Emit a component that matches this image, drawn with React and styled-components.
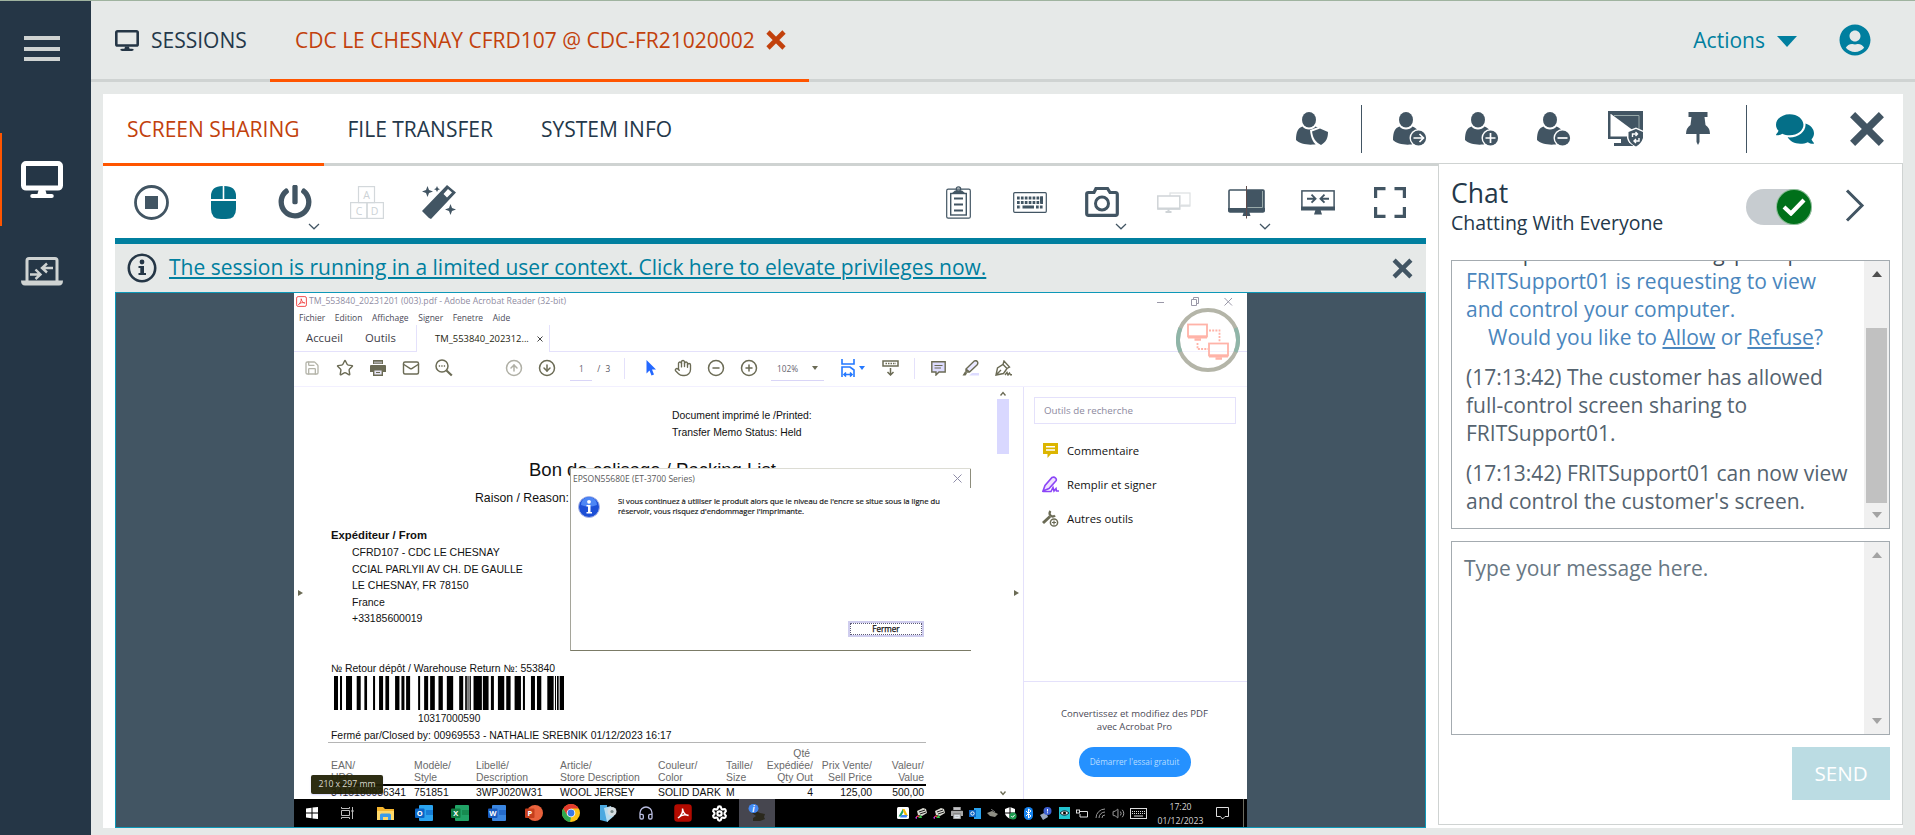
import React from 'react';
import styled, { createGlobalStyle, css } from 'styled-components';
import { FaPowerOff, FaComments, FaUserCircle } from 'react-icons/fa';
import {
  Save, Star, Mail, CircleArrowUp, CircleArrowDown, Hand,
  CircleMinus, CirclePlus, Settings, Headphones, Volume2,
} from 'lucide-react';

const c = {
  navy: '#253646', slate: '#425563', teal: '#007f9f', tealDark: '#046f88', orange: '#ff5500',
  rust: '#c2410c', grey: '#e6e9e8', line: '#cfd3d2', text: '#24384a', lilac: '#e4e1fb', olive: '#6b6b55',
};
const ui = '"Open Sans", "Noto Sans", sans-serif';
const doc = '"Liberation Sans", Arial, sans-serif';

const Global = createGlobalStyle`
  * { box-sizing: border-box; }
  body { margin: 0; background: ${c.grey}; font-family: ${ui}; font-size: 21px; color: ${c.text}; overflow: hidden; }
  svg { display: block; flex: none; }
`;

/* ---------- application shell ---------- */
const Shell = styled.div`
  display: flex; height: 835px; border-top: 1px solid #9fb39f; background: ${c.grey};
`;
const Sidebar = styled.nav`
  width: 91px; flex: none; background: ${c.navy}; display: flex; flex-direction: column;
`;
const Burger = styled.div`
  width: 36px; height: 25px; margin: 35px 0 0 24px; display: flex; flex-direction: column; justify-content: space-between;
  i { height: 4px; background: ${c.line}; }
`;
const NavItem = styled.div`
  height: 93px; display: flex; align-items: center; padding-left: ${p => (p.$active ? 19 : 21)}px;
  border-left: ${p => (p.$active ? `2px solid ${c.orange}` : 'none')};
  margin-top: ${p => p.$top || 0}px; padding-bottom: ${p => (p.$active ? 0 : 2)}px;
`;
const Main = styled.div`flex: 1; min-width: 0; display: flex; flex-direction: column;`;
const Header = styled.header`
  height: 81px; flex: none; display: flex; border-bottom: 3px solid ${c.line};
`;
const SessionTab = styled.div`
  height: 81px; display: flex; align-items: center; gap: 12px; padding: 0 24px 3px;
  position: relative; white-space: nowrap; width: ${p => p.$w}px;
  color: ${p => (p.$active ? c.rust : c.text)};
  ${p => p.$active && css`padding-left: 25px; border-bottom: 3px solid ${c.orange}; padding-bottom: 0; gap: 11px;`}
`;
const HeaderTools = styled.div`
  margin-left: auto; display: flex; align-items: center; padding-right: 44px; color: ${c.teal};
  svg:last-child { margin-left: 42px; }
`;
const Caret = styled.span`
  border: solid transparent; border-width: 11px 10px 0; border-top-color: ${p => p.$color || c.teal}; margin: 2px 0 0 12px;
`;

const Panel = styled.section`
  margin: 12px 12px 0 12px; height: 734px; background: #fff; display: flex; flex-direction: column;
`;
const TabBar = styled.div`height: 69px; flex: none; display: flex;`;
const Tab = styled.div`
  height: 72px; padding: 0 24px 3px; display: flex; align-items: center; position: relative; white-space: nowrap;
  ${p => p.$active && css`color: ${c.rust}; border-bottom: 3px solid ${c.orange}; padding-bottom: 0;`}
`;
const TabActions = styled.div`margin-left: auto; display: flex; align-items: center; color: ${c.slate};`;
const Slot = styled.div`
  width: 72px; height: 72px; display: flex; align-items: center; justify-content: center; position: relative;
  color: ${p => p.$color || c.slate};
`;
const SlotChevron = styled.svg`position: absolute; left: 49px; top: 57px;`;
const Divider = styled.span`width: 1px; height: 48px; margin: 1px 12px 0; background: ${c.slate};`;

const Body = styled.div`flex: 1; display: flex; min-height: 0;`;
const Viewer = styled.div`
  flex: 1; min-width: 0; border-top: 3px solid ${c.line}; padding: 0 12px; display: flex; flex-direction: column;
`;
const Toolbar = styled.div`height: 72px; flex: none; display: flex; justify-content: space-between;`;
const ToolGroup = styled.div`display: flex;`;
const Banner = styled.div`
  height: 54px; flex: none; border-top: 6px solid ${c.teal}; background: ${c.grey};
  display: flex; align-items: center; padding: 0 13px 0 12px; justify-content: space-between;
`;
const BannerMessage = styled.div`display: flex; align-items: center; gap: 12px;`;
const BannerLink = styled.span`
  color: ${c.teal}; text-decoration: underline; text-decoration-thickness: 2px; text-underline-offset: 2px; white-space: nowrap;
  padding-bottom: 2px;
`;
const Stage = styled.div`
  height: 536px; flex: none; border: 1px solid #0d98b8; background: ${c.slate}; display: flex; justify-content: center;
`;

/* ---------- chat ---------- */
const Chat = styled.aside`
  width: 465px; height: 662px; flex: none; border: 1px solid ${c.line}; padding: 0 12px 0 12px;
`;
const ChatHeader = styled.div`height: 96px; display: flex; padding-top: 14px;`;
const ChatTitles = styled.div`flex: 1;`;
const ChatTitle = styled.div`font-size: 26.5px; line-height: 31px;`;
const ChatSub = styled.div`font-size: 19.5px; line-height: 28px;`;
const Toggle = styled.div`
  width: 66px; height: 36px; margin: 11px 33px 0 0; border-radius: 18px; background: #c7ccd0; display: flex; justify-content: flex-end;
`;
const Knob = styled.div`
  width: 36px; height: 36px; border-radius: 50%; background: #00701a; border: 1px solid #fff8;
  display: flex; align-items: center; justify-content: center;
`;
const ChatChevron = styled.svg`margin: 11px 25px 0 0;`;
const TextBox = styled.div`
  height: ${p => p.$h}px; border: 1px solid #a4abb0; display: flex; overflow: hidden; margin-bottom: 12px;
`;
const Messages = styled.div`
  flex: 1; padding-left: 14px; line-height: 28px; margin-top: -22px; color: #55636f; white-space: nowrap;
`;
const Message = styled.div`margin-bottom: ${p => (p.$tight ? 0 : 12)}px; color: ${p => p.$color || 'inherit'};
  word-spacing: ${p => (p.$loose ? 4 : 0)}px;
`;
const Indent = styled.div`padding-left: 22px;`;
const ChatLink = styled.span`text-decoration: underline; text-decoration-thickness: 2px; text-underline-offset: 2px;`;
const Placeholder = styled.div`flex: 1; padding: 12px 0 0 12px; line-height: 28px; color: #687783;`;
const ScrollTrack = styled.div`
  width: 25px; background: #f0f0f0; display: flex; flex-direction: column; align-items: center; justify-content: space-between;
  padding: 10px 0;
`;
const ScrollArrow = styled.span`
  border: solid transparent; border-width: ${p => (p.$down ? '6px 5.5px 0' : '0 5.5px 6px')};
  border-${p => (p.$down ? 'top' : 'bottom')}-color: ${p => p.$color || '#a3a3a3'};
`;
const ScrollThumb = styled.div`width: 21px; height: 175px; margin-top: 51px; margin-bottom: auto; background: #c1c1c1;`;
const Send = styled.div`
  width: 98px; height: 53px; margin-left: auto; background: #bbdce3; color: #fff; font-size: 20.6px;
  display: flex; align-items: center; justify-content: center; padding-bottom: 1px;
`;

/* ---------- remote desktop ---------- */
const Desktop = styled.div`
  width: 953px; background: #fff; position: relative; display: flex; flex-direction: column; overflow: hidden; white-space: nowrap;
`;
const TitleBar = styled.div`
  height: 17px; display: flex; align-items: center; padding: 0 14px 0 2px; gap: 2px; font-size: 8.7px; line-height: 17px; color: #8f8ca2;
`;
const WindowButtons = styled.svg`margin-left: auto;`;
const MenuBar = styled.div`
  height: 15px; display: flex; padding-left: 5px; gap: 9.6px; font-size: 8.5px; line-height: 15px; color: #4b4a58;
`;
const DocTabs = styled.div`height: 27px; display: flex; line-height: 26px; font-size: 11.3px; color: #3e3d48;`;
const AppTab = styled.div`width: ${p => p.$w}px; padding-left: ${p => p.$pad}px; border-bottom: 1px solid ${c.lilac};`;
const FileTab = styled.div`
  width: 134px; border: solid ${c.lilac}; border-width: 0 1px; font-size: 9.42px; color: #26260f; padding-left: 18px;
  display: flex; gap: 8px; align-items: center;
`;
const TabFill = styled.div`flex: 1; border-bottom: 1px solid ${c.lilac};`;
const AcroBar = styled.div`
  height: 35px; display: flex; align-items: center; padding: 0 0 2px 2px; border-bottom: 1px solid #f2f0ff; color: ${c.olive};
  font-size: 8.3px;
`;
const AcroGroup = styled.div`
  display: flex; margin-left: ${p => p.$ml || 0}px;
  > * { width: ${p => p.$pitch || 32.5}px; }
`;
const AcroIcon = styled.span`display: flex; justify-content: center; align-items: center; color: ${p => p.$color || 'inherit'};`;
const Field = styled.div`
  width: ${p => p.$w}px; height: 22px; margin: 3px 0 0 ${p => p.$ml}px; border-bottom: 1px solid #d9d5f7; display: flex; align-items: center;
  justify-content: center; gap: 14px; color: #66656f; padding-bottom: 2px;
`;
const Pages = styled.span`margin-left: 5px; width: 14px; word-spacing: 3px; color: #55545e;`;
const AcroSep = styled.span`width: 1px; height: 21px; background: ${c.lilac}; margin-left: ${p => p.$ml}px;`;
const MiniCaret = styled.span`
  border: solid transparent; border-width: 4px 3px 0; border-top-color: ${p => p.$color || c.olive};
`;
const FitGroup = styled.div`display: flex; align-items: center; gap: 4px; margin: 0 17px;`;

const Workspace = styled.div`height: 412px; display: flex;`;
const Handle = styled.div`
  width: ${p => p.$w}px; display: flex; align-items: center; justify-content: ${p => (p.$w > 12 ? 'center' : 'flex-start')};
  padding-left: ${p => (p.$w > 12 ? 0 : 4)}px;
`;
const PlayMark = styled.span`border: solid transparent; border-width: 3.5px 0 3.5px 5px; border-left-color: ${c.olive};`;
const Page = styled.div`width: 691px; overflow: hidden; font-family: ${doc}; font-size: 10.4px; color: #111;`;
const Line = styled.div`
  height: ${p => p.$h || 14}px; line-height: ${p => p.$h || 14}px; margin: ${p => p.$mt || 0}px 0 0 ${p => p.$ml}px;
  font-size: ${p => p.$size || 10.4}px; font-weight: ${p => (p.$bold ? 700 : 400)};
`;
const Address = styled.div`padding-top: 1px;`;
const Barcode = styled.svg`margin: 0 0 0 28px;`;
const Rule = styled.div`
  width: 598px; height: ${p => (p.$thick ? 2 : 1)}px; background: ${p => (p.$thick ? '#000' : '#b5b5b5')}; margin: ${p => p.$mt}px 0 0 22px;
`;
const ItemRow = styled.div`
  display: grid; grid-template-columns: 83px 62px 84px 98px 68px 37px 50px 59px 52px; align-items: end; margin: ${p => p.$mt}px 0 0 25px;
  line-height: ${p => (p.$head ? 12 : 14)}px; color: ${p => (p.$head ? '#6a6a6a' : '#111')};
`;
const Cell = styled.div`
  text-align: ${p => (p.$right ? 'right' : 'left')}; white-space: pre; justify-self: ${p => (p.$right ? 'end' : 'start')};
`;
const Rail = styled.div`width: 12px; display: flex; flex-direction: column; align-items: center; padding: 4px 0 3px;`;
const RailThumb = styled.div`width: 12px; height: 55px; background: #d9d8ff; margin: 3px 0 auto;`;

const ToolsPane = styled.div`width: 224px; border-left: 1px solid ${c.lilac}; font-size: 11.3px; color: #111; padding-top: 10px;`;
const ToolSearch = styled.div`
  width: 202px; height: 27px; margin: 0 0 9px 10px; border: 1px solid ${c.lilac}; padding-left: 9px; line-height: 25px; font-size: 9.77px; color: #8d8aa0;
`;
const ToolItem = styled.div`height: 34px; display: flex; align-items: center; gap: 8px; padding-left: 18px;`;
const Promo = styled.div`
  margin-top: 146px; border-top: 1px solid ${c.lilac}; padding-top: 26px; text-align: center; font-size: 9.57px; line-height: 12.5px; color: #4c4b57;
  padding-right: 2px;
`;
const PromoButton = styled.div`
  width: 112px; height: 30px; margin: 14px auto 0; border-radius: 15px; background: #2591ff; color: #b5dcff; font-size: 8.2px; line-height: 30px;
`;

const Badge = styled.svg`position: absolute; left: 882px; top: 15px;`;
const Dialog = styled.div`
  position: absolute; left: 276px; top: 175px; width: 401px; height: 183px; background: #fff;
  border: solid #dcdcd4; border-width: 1px 0 1px 1px; border-bottom-color: #7b7b66; border-left-color: #a5a59a;
`;
const DialogTitle = styled.div`
  height: 19px; display: flex; align-items: center; justify-content: space-between; padding: 0 8px 0 2px; border-right: 1px solid #8d8d7c;
  font-size: 8.54px; color: #5a5a5a;
`;
const DialogBody = styled.div`
  display: flex; gap: 18px; padding: 8px 0 0 7px; font-size: 7.63px; line-height: 9.5px; color: #222; height: 133px;
  p { margin: 1px 0 0; -webkit-text-stroke: 0.2px #222; }
`;
const DialogButton = styled.div`
  width: 76px; height: 16px; margin-left: 277px; border: 2px solid #cfcdee; display: flex;
  font-size: 8.1px; line-height: 10px; text-align: center; color: #111; -webkit-text-stroke: 0.25px #111;
  span { flex: 1; border: 1px dotted #5d5b79; }
`;
const SizeTip = styled.div`
  position: absolute; left: 17px; top: 482px; width: 72px; height: 19px; background: rgba(34, 34, 6, 0.95); border-radius: 2px;
  color: #dadad0; font-size: 8.66px; line-height: 19px; text-align: center; box-shadow: 0 1px 2px #9c9cff66;
`;

const Taskbar = styled.div`height: 28px; background: #000; display: flex; align-items: center; color: #fff;`;
const TaskSlot = styled.div`
  width: ${p => p.$w || 37.2}px; height: 28px; display: flex; align-items: center; justify-content: center;
  background: ${p => (p.$active ? '#46464f' : 'none')}; color: ${p => p.$color || '#fff'};
`;
const Tray = styled.div`margin-left: auto; display: flex; height: 28px;`;
const Clock = styled.div`
  width: 63px; padding-top: 1px; font-size: 8.66px; line-height: 14px; text-align: center; color: #d6d6d6;
`;
const ShowDesktop = styled.span`width: 4px; margin-left: 10px; border-left: 1px solid #6b6b60;`;

/* ---------- drawings ---------- */
const Cross = ({ s = 20, w = 4.6, color = c.slate }) => (
  <svg width={s} height={s} viewBox="0 0 20 20"><path d="M2 2 18 18M18 2 2 18" stroke={color} strokeWidth={w} /></svg>
);
const Person = ({ children }) => (
  <svg width="34" height="34" viewBox="0 0 34 34" fill={c.slate}>
    <ellipse cx="13" cy="7.8" rx="7" ry="7.8" />
    <path d="M0 28C0 20 2 16 6.5 14.5 9 18.5 17 18.5 19.5 14.5 24 16 27 20 27 29 23 34 5 34 0 28Z" />
    {children}
  </svg>
);
const PersonBadge = ({ d }) => (
  <Person><circle cx="25.5" cy="26" r="9" fill="#fff" /><circle cx="25.5" cy="26" r="7.6" /><path d={d} stroke="#fff" strokeWidth="1.7" fill="none" /></Person>
);
const Monitor = ({ w, h, sw, color }) => (
  <svg width={w} height={h} viewBox={`0 0 ${w} ${h}`} fill="none">
    <rect x={sw / 2} y={sw / 2} width={w - sw} height={h * 0.8 - sw} rx={sw / 2} stroke={color} strokeWidth={sw} />
    <path d={`M${w * 0.42} ${h * 0.78}H${w * 0.58}L${w * 0.61} ${h * 0.9}H${w * 0.39}Z`} fill={color} />
    <rect x={w * 0.22} y={h * 0.89} width={w * 0.56} height={h * 0.11} rx="2" fill={color} />
  </svg>
);
const Laptop = () => (
  <svg width="42" height="29" viewBox="0 0 42 29" fill="none" stroke={c.line}>
    <path d="M6 24V3.5Q6 1.5 8 1.5H34Q36 1.5 36 3.5V24" strokeWidth="3" />
    <path d="M0 23.5H42Q42 28.5 38 28.5H4Q0 28.5 0 23.5Z" fill={c.line} stroke="none" />
    <path d="M32 11H21M26 6.5 21 11 26 15.5M9 17.5H19M14.5 12.5 19.5 17.5 14.5 22" strokeWidth="2.4" />
  </svg>
);
const InfoIcon = () => (
  <svg width="30" height="30" viewBox="0 0 30 30" fill={c.navy}>
    <circle cx="15" cy="15" r="13.2" fill="none" stroke={c.navy} strokeWidth="2.6" />
    <circle cx="15" cy="9" r="2.4" /><path d="M11.5 13H17V20H19V22H11.5V20H13.3V15H11.5Z" />
  </svg>
);
const Chevron = () => (
  <SlotChevron width="12" height="7" viewBox="0 0 12 7"><path d="M1 1 6 5.8 11 1" fill="none" stroke={c.slate} strokeWidth="1.2" /></SlotChevron>
);
const bars = [[0,12],[18,6],[36,18],[68,12],[91,8],[117,6],[135,12],[154,11],[183,13],[202,9],[216,12],[252,6],[270,12],[288,14],[313,13],[338,19],[375,12],[393,5],[400,3],[406,4],[418,25],[446,17],[470,9],[491,19],[516,13],[541,19],[566,6],[590,12],[608,13],[639,19],[662,3],[668,5],[676,13]];

const Office = ({ letter, a, b, round }) => (
  <svg width="18" height="18" viewBox="0 0 18 18">
    {round ? <circle cx="10" cy="9" r="8" fill={b} /> : <rect x="4" y="1" width="14" height="16" rx="1" fill={b} />}
    {!round && <rect x="11" y="6" width="7" height="5" fill={a} opacity="0.6" />}
    <rect x="0" y="4.5" width="9.5" height="9.5" rx="1" fill={a} />
    <text x="4.8" y="12" fontSize="7.5" fontWeight="700" fontFamily="Open Sans" fill="#fff" textAnchor="middle">{letter}</text>
  </svg>
);
const PdfMark = ({ s, bg, fg, border }) => (
  <svg width={s} height={s} viewBox="0 0 18 18"><rect x="1" y="1" width="16" height="16" rx="2.5" fill={bg} stroke={border} strokeWidth="1.5" />
    <path d="M4 14C7 12 9 8 8.5 4.5 9 8 11 11 14.5 11.5 11 10 7 11 4 14Z" fill="none" stroke={fg} strokeWidth="1.4" /></svg>
);
const SmallFax = () => (
  <svg width="13" height="12" viewBox="0 0 13 12"><path d="M2 4 8 1 11 2 12 6 7 9 3 8Z" fill="#d8d8d0" /><path d="M4 5 10 3M5 7 11 5" stroke="#222" /><path d="M1 10 3 8 5 10Z" fill="#e83b3b" /><path d="M3 11 6 8 7 11Z" fill="#38c14a" /><path d="M0 11 2 9V12Z" fill="#c738e8" /></svg>
);
const PrinterMark = ({ s, color, paper }) => (
  <svg width={s} height={s} viewBox="0 0 16 16" fill={color}><path d="M3 0H13V4H3ZM1 5H15Q16 5 16 6V12H13V9H3V12H0V6Q0 5 1 5Z" /><path d="M4 1.500H12V3.500H4Z" fill={paper} opacity="0.5" /><path d="M3.700 9.700H12.300V15.300H3.700Z" fill={paper} stroke={color} strokeWidth="1.400" /><path d="M6 12.500H10" stroke={color} /></svg>
);
const SearchMark = () => (
  <svg width="18" height="18" viewBox="0 0 18 18" fill="none" stroke={c.olive}><circle cx="7" cy="7" r="6" strokeWidth="1.500" /><path d="M11.500 11.500 16.800 16.500" strokeWidth="2.200" /><path d="M3.800 7H10.500" strokeWidth="1.300" strokeDasharray="1.300 1.200" /></svg>
);

const address = ['CFRD107 - CDC LE CHESNAY', 'CCIAL PARLYII AV CH. DE GAULLE', 'LE CHESNAY, FR 78150', 'France', '+33185600019'];
const headings = ['EAN/\nUPC', 'Modèle/\nStyle', 'Libellé/\nDescription', 'Article/\nStore Description', 'Couleur/\nColor', 'Taille/\nSize', 'Qté \nExpédiée/\nQty Out', 'Prix Vente/\nSell Price', 'Valeur/\nValue'];
const item = ['3415180936341', '751851', '3WPJ020W31', 'WOOL JERSEY', 'SOLID DARK', 'M', '4', '125,00', '500,00'];

function Acrobat() {
  const s = { size: 16, strokeWidth: 2 };
  return (
    <>
      <TitleBar>
        <PdfMark s={11} bg="#fff" fg="#f03b3b" border="#f03b3b" />
        <span>TM_553840_20231201 (003).pdf - Adobe Acrobat Reader (32-bit)</span>
        <WindowButtons width="76" height="9" viewBox="0 0 76 9" fill="none" stroke="#9a98a8">
          <path d="M0 5.5H7M67.500 1 75 8.500M75 1 67.500 8.500" /><path d="M34.500 2.500H39.500V8.500H34.500ZM36.500 2.500V.5H41.500V6.500H39.500" />
        </WindowButtons>
      </TitleBar>
      <MenuBar>{['Fichier', 'Edition', 'Affichage', 'Signer', 'Fenetre', 'Aide'].map(t => <span key={t}>{t}</span>)}</MenuBar>
      <DocTabs>
        <AppTab $w={71} $pad={12}>Accueil</AppTab>
        <AppTab $w={51} $pad={0}>Outils</AppTab>
        <FileTab>TM_553840_202312... <svg width="6" height="6" viewBox="0 0 6 6"><path d="M.5.5 5.500 5.500M5.500.5.5 5.500" stroke="#444" /></svg></FileTab>
        <TabFill />
      </DocTabs>
      <AcroBar>
        <AcroGroup $pitch={32.800}>
          <AcroIcon $color="#b5b5aa"><Save {...s} /></AcroIcon>
          <AcroIcon><Star {...s} size={18} strokeWidth={1.9} /></AcroIcon>
          <AcroIcon><PrinterMark s={16} color={c.olive} paper="#e6e4f4" /></AcroIcon>
          <AcroIcon><Mail {...s} size={18} strokeWidth={1.9} /></AcroIcon>
          <AcroIcon><SearchMark /></AcroIcon>
        </AcroGroup>
        <AcroGroup $ml={38} $pitch={32.7}>
          <AcroIcon $color="#b0b0a6"><CircleArrowUp {...s} size={18} /></AcroIcon>
          <AcroIcon><CircleArrowDown {...s} size={18} /></AcroIcon>
        </AcroGroup>
        <Field $w={22} $ml={7}>1</Field>
        <Pages>/ 3</Pages>
        <AcroSep $ml={13} />
        <AcroGroup $ml={9} $pitch={32.700}>
          <AcroIcon><svg width="10" height="16" viewBox="0 0 10 16"><path d="M.5 0V13.500L3.500 10.500 5.500 15.500 8 14.500 6 9.500H10Z" fill="#2468ff" /></svg></AcroIcon>
          <AcroIcon><Hand {...s} size={18} strokeWidth={1.8} /></AcroIcon>
          <AcroIcon><CircleMinus {...s} size={18} /></AcroIcon>
          <AcroIcon><CirclePlus {...s} size={18} /></AcroIcon>
        </AcroGroup>
        <Field $w={53} $ml={6}>102% <MiniCaret /></Field>
        <FitGroup>
          <svg width="14" height="18" viewBox="0 0 14 18" fill="none" stroke="#2478ff" strokeWidth="1.6"><path d="M1 0V5H13V0M1 18V8H9L13 11V18M3 15.500H11M5 13.500 3 15.500 5 17.500M9 13.500 11 15.500 9 17.500" /></svg>
          <MiniCaret $color="#2478ff" />
        </FitGroup>
        <svg width="17" height="16" viewBox="0 0 17 16" fill="none" stroke={c.olive} strokeWidth="1.5"><rect x="1" y="1" width="15" height="5" /><path d="M3.500 3.500H14" strokeDasharray="1.5 1" /><path d="M8.500 8V15M5.500 12 8.500 15 11.500 12" /></svg>
        <AcroSep $ml={15} />
        <AcroGroup $ml={7}>
          <AcroIcon><svg width="15" height="15" viewBox="0 0 15 15" fill="#dddcff" stroke={c.olive} strokeWidth="1.400"><path d="M.8.8H14.200V11H8L5 14V11H.8Z" /><path d="M3.500 4.500H11.500M3.500 7H10" strokeWidth="1.100" /></svg></AcroIcon>
          <AcroIcon><svg width="17" height="16" viewBox="0 0 17 16" fill="#e8e7ff" stroke={c.olive} strokeWidth="1.400"><path d="M7 15.500H17V13H10Z" fill="#dddcff" stroke="none" /><path d="M4 9 12 1.200Q14 0 15.300 1.500 16.500 3 15 5L7.500 12H4ZM4 9 7.500 12" /><path d="M3 11.500 5 13.500 3.500 15.500H.5Z" fill={c.olive} stroke="none" /></svg></AcroIcon>
          <AcroIcon><svg width="17" height="16" viewBox="0 0 17 16" fill="none" stroke={c.olive} strokeWidth="1.400"><path d="M1 15 2.500 8 8 4.500 12 8.500 8.500 13.500ZM1 15 6 10M8 4.500 9 1 14.500 7 12 8.500" /><path d="M10 15 12 12.500 13 15 14.500 13 15.500 14.800H17" /></svg></AcroIcon>
        </AcroGroup>
      </AcroBar>
      <Workspace>
        <Handle $w={12}><PlayMark /></Handle>
        <Page>
          <Line $h={16.5} $mt={21} $ml={366}>Document imprimé le /Printed:</Line>
          <Line $h={16} $ml={366}>Transfer Memo Status: Held</Line>
          <Line $h={22} $mt={18} $ml={223} $size={18.5}>Bon de colisage / Packing List</Line>
          <Line $h={16} $mt={9.5} $ml={169} $size={12.25}>Raison / Reason:</Line>
          <Line $h={16} $mt={21} $ml={25} $size={11.3} $bold>Expéditeur / From</Line>
          <Address>{address.map(t => <Line key={t} $h={16.6} $ml={46} $size={10.53}>{t}</Line>)}</Address>
          <Line $mt={35.5} $ml={25}>№ Retour dépôt / Warehouse Return №: 553840</Line>
          <Barcode width="230" height="34" viewBox="0 0 689 33" preserveAspectRatio="none">
            {bars.map(([x, w]) => <rect key={x} x={x} y="0" width={w} height="33" />)}
          </Barcode>
          <Line $mt={2} $ml={112} $size={10.2}>10317000590</Line>
          <Line $h={15} $mt={2} $ml={25}>Fermé par/Closed by: 00969553 - NATHALIE SREBNIK 01/12/2023 16:17</Line>
          <Rule $mt={-1} />
          <ItemRow $head $mt={5}>{headings.map((t, i) => <Cell key={t} $right={i > 5}>{t}</Cell>)}</ItemRow>
          <Rule $thick $mt={0} />
          <ItemRow $mt={0}>{item.map((t, i) => <Cell key={t} $right={i > 5}>{t}</Cell>)}</ItemRow>
        </Page>
        <Rail>
          <svg width="6" height="5" viewBox="0 0 6 5"><path d="M.5 4.500 3 1.500 5.500 4.500" fill="none" stroke={c.olive} strokeWidth="1.4" /></svg>
          <RailThumb />
          <svg width="6" height="5" viewBox="0 0 6 5"><path d="M.5.5 3 3.500 5.500.5" fill="none" stroke={c.olive} strokeWidth="1.4" /></svg>
        </Rail>
        <Handle $w={14}><PlayMark /></Handle>
        <ToolsPane>
          <ToolSearch>Outils de recherche</ToolSearch>
          <ToolItem>
            <svg width="17" height="16" viewBox="0 0 17 16"><path d="M1 1H16V12H9L5.500 16V12H1Z" fill="#dcb500" /><path d="M4 4.800H13M4 8H13" stroke="#fff" strokeWidth="1.4" /></svg>
            Commentaire
          </ToolItem>
          <ToolItem>
            <svg width="17" height="17" viewBox="0 0 17 17" fill="#f0e2ff" stroke="#8b45f7" strokeWidth="1.600"><path d="M1 15 3 9.500 10 1.500Q12 .5 13.500 2 15 3.500 13.800 5L7 12.500Z" /><path d="M1 15.500H9L11 11.500 12 15 14 12.500 14.500 15H17" fill="none" /></svg>
            Remplir et signer
          </ToolItem>
          <ToolItem>
            <svg width="17" height="17" viewBox="0 0 17 17" fill="none" stroke={c.olive}>
              <path d="M1 13 8 6.500" strokeWidth="3" /><path d="M8.500 1A3 3 0 1 0 13 5.500" strokeWidth="2.400" /><circle cx="12" cy="12.500" r="3.600" fill="#fff" strokeWidth="1.500" /><path d="M10 12.500H14M12 10.500V14.500" strokeWidth="1.200" />
            </svg>
            Autres outils
          </ToolItem>
          <Promo>
            Convertissez et modifiez des PDF<br />avec Acrobat Pro
            <PromoButton>Démarrer l'essai gratuit</PromoButton>
          </Promo>
        </ToolsPane>
      </Workspace>
      <Badge width="64" height="64" viewBox="0 0 64 64" fill="none">
        <circle cx="32" cy="32" r="30" stroke="#b4b5a8" strokeWidth="4" fill="#fff8" />
        <path d="M4.500 20A30 30 0 0 0 4.500 44M59.500 20A30 30 0 0 1 59.500 44" stroke="#8fb5a8" strokeWidth="4" />
        <g stroke="#ffb3a8" strokeWidth="1.800">
          <rect x="12" y="16.500" width="19" height="12" /><rect x="33" y="35.500" width="19" height="12" />
          <path d="M12 29H31M33 48H52" strokeWidth="3" /><path d="M18.500 31.500H25M39.500 50.500H46" strokeWidth="2.500" />
          <path d="M33 22.500H43.500V34M21.500 35V41H32" strokeDasharray="2 1.200" />
        </g>
      </Badge>
      <Dialog>
        <DialogTitle>EPSON55680E (ET-3700 Series)
          <svg width="9" height="9" viewBox="0 0 9 9"><path d="M.5.5 8.500 8.500M8.500.5.5 8.500" stroke="#8f8da8" /></svg>
        </DialogTitle>
        <DialogBody>
          <svg width="22" height="22" viewBox="0 0 22 22"><circle cx="11" cy="11" r="10.500" fill="#1c4fd6" stroke="#aab6e6" /><path d="M3 9A8 8 0 0 1 19 9Q11 12 3 9Z" fill="#4d86f5" /><circle cx="11" cy="5.800" r="1.900" fill="#fff" /><path d="M8.500 9H12.500V16H14V17.500H8.500V16H10V10.500H8.500Z" fill="#fff" /></svg>
          <p>Si vous continuez à utiliser le produit alors que le niveau de l'encre se situe sous la ligne du<br />réservoir, vous risquez d'endommager l'imprimante.</p>
        </DialogBody>
        <DialogButton><span>Fermer</span></DialogButton>
      </Dialog>
      <SizeTip>210 x 297 mm</SizeTip>
    </>
  );
}

function TaskbarRow() {
  return (
    <Taskbar>
      <TaskSlot $w={36}><svg width="12" height="12" viewBox="0 0 12 12" fill="#fff"><path d="M0 1.500 5.500.8V5.500H0ZM6.500.6 12 0V5.500H6.500ZM0 6.500H5.500V11.200L0 10.500ZM6.500 6.500H12V12L6.500 11.400Z" /></svg></TaskSlot>
      <TaskSlot $w={34}><svg width="13" height="12" viewBox="0 0 13 12" fill="none" stroke="#bbb"><path d="M.5 0V1.500H8.500V0M.5 12V10.500H8.500V12M.5 3.500H8.500V8.500H.5ZM11.500 0V12M10 4H13" /></svg></TaskSlot>
      <TaskSlot $w={42}><svg width="17" height="14" viewBox="0 0 17 14"><path d="M0 1H6L8 3H17V14H0Z" fill="#f5b52e" /><path d="M0 5H17V14H0Z" fill="#ffd868" /><path d="M3 14V9Q3 7.500 4.500 7.500H12.500Q14 7.500 14 9V14H11V11H6V14Z" fill="#3c9be8" /></svg></TaskSlot>
      <TaskSlot $w={35}><Office letter="O" a="#0a64c4" b="#2aa3ef" /></TaskSlot>
      <TaskSlot><Office letter="X" a="#107c41" b="#21a366" /></TaskSlot>
      <TaskSlot><Office letter="W" a="#185abd" b="#3a86e0" /></TaskSlot>
      <TaskSlot><Office letter="P" a="#c43e1c" b="#e8623c" round /></TaskSlot>
      <TaskSlot><svg width="18" height="18" viewBox="0 0 18 18"><circle cx="9" cy="9" r="9" fill="#fbc116" /><path d="M9 0A9 9 0 0 1 16.800 4.500H9L5 11.200 1.200 4.500A9 9 0 0 1 9 0Z" fill="#e33b2e" /><path d="M1.200 4.500 5.200 11.200 9 13.500 8 18A9 9 0 0 1 1.200 4.500Z" fill="#2da94f" /><circle cx="9" cy="9" r="4.300" fill="#fff" /><circle cx="9" cy="9" r="3.400" fill="#3b78e7" /></svg></TaskSlot>
      <TaskSlot><svg width="18" height="17" viewBox="0 0 18 17"><path d="M1 0H8L9 17 1 15Z" fill="#4aa8e0" /><path d="M5 3 12 1 15 11 8 17Z" fill="#b5dcf0" /><circle cx="13" cy="6.500" r="4.500" fill="#d5dce0" /><circle cx="13" cy="6.500" r="1.600" fill="#788" /></svg></TaskSlot>
      <TaskSlot $color="#b9bde0"><Headphones size={16} strokeWidth={2} /></TaskSlot>
      <TaskSlot><PdfMark s={18} bg="#b30b00" fg="#fff" border="#b30b00" /></TaskSlot>
      <TaskSlot><Settings size={17} strokeWidth={3} /></TaskSlot>
      <TaskSlot $active $w={36}><svg width="18" height="18" viewBox="0 0 18 18"><path d="M4 9 8 7 12 9 17 10 16 13 17 15 12 17H5V14L8 12Z" fill="#2b291e" /><ellipse cx="5.500" cy="4.500" rx="5" ry="4.500" fill="#4289f5" /><text x="5.500" y="7.500" fontSize="8" fontStyle="italic" fontWeight="700" textAnchor="middle" fill="#fff">i</text></svg></TaskSlot>
      <Tray>
        <TaskSlot $w={17.9}><svg width="12" height="12" viewBox="0 0 12 12"><rect width="12" height="12" rx="1.500" fill="#fff" /><path d="M6 1.500 3.500 6 1.500 9.500H4L6.500 5Z" fill="#1da462" /><path d="M5.500 2H7.500L11 9H8Z" fill="#fbbc04" /><path d="M3 10.500 4.500 8H10.500L9.500 10.500Z" fill="#4285f4" /></svg></TaskSlot>
        <TaskSlot $w={17.9}><SmallFax /></TaskSlot>
        <TaskSlot $w={17.9}><SmallFax /></TaskSlot>
        <TaskSlot $w={17.9}><PrinterMark s={12} color="#a8a8a8" paper="#dfe6ee" /></TaskSlot>
        <TaskSlot $w={17.9}><svg width="12" height="11" viewBox="0 0 12 11"><rect x="5" width="7" height="11" fill="#2aa3ef" /><rect y="2" width="7" height="7" fill="#0a64c4" /><circle cx="3.500" cy="5.500" r="1.700" fill="none" stroke="#fff" /></svg></TaskSlot>
        <TaskSlot $w={17.9}><svg width="12" height="9" viewBox="0 0 12 9"><path d="M0 4 5 2 11 5 8 8 3 7Z" fill="#8f8f85" /><path d="M4 0 8 3" stroke="#777" /></svg></TaskSlot>
        <TaskSlot $w={17.9}><svg width="13" height="13" viewBox="0 0 13 13"><path d="M6 0 11 2V6Q11 9 6 12 1 9 1 6V2Z" fill="#fff" /><path d="M6 0V12M1 6H11" stroke="#000" /><circle cx="9" cy="9" r="3.600" fill="#1c9c50" /><path d="M7.300 9 8.600 10.300 10.800 7.800" stroke="#fff" fill="none" /></svg></TaskSlot>
        <TaskSlot $w={17.9}><svg width="9" height="13" viewBox="0 0 9 13"><rect width="9" height="13" rx="4.500" fill="#1684f0" /><path d="M2 4 7 9 4.500 11V2L7 4 2 9" fill="none" stroke="#fff" /></svg></TaskSlot>
        <TaskSlot $w={17.9}><svg width="12" height="13" viewBox="0 0 12 13"><path d="M0 8 6 5 8 10 3 13Z" fill="#9aa6bd" /><circle cx="7.500" cy="4" r="4" fill="#3d5fd0" /><path d="M7.500 2V4.500M7.500 5.300V6.300" stroke="#fff" /></svg></TaskSlot>
        <TaskSlot $w={17.9}><svg width="11" height="12" viewBox="0 0 11 12"><rect width="11" height="12" fill="#22c3cf" /><path d="M1 6Q5.500 1.500 10 6 5.500 10.500 1 6Z" fill="#eee" stroke="#123" /><circle cx="5.500" cy="6" r="1.500" /></svg></TaskSlot>
        <TaskSlot $w={17.9}><svg width="12" height="9" viewBox="0 0 12 9" fill="none" stroke="#ddd"><path d="M3 2.500H11.500V8H4V5" /><rect x=".5" y="1" width="3" height="3" /></svg></TaskSlot>
        <TaskSlot $w={17.9}><svg width="11" height="11" viewBox="0 0 11 11" fill="none" stroke="#999"><path d="M1 10A9 9 0 0 1 10 1M4 10A6 6 0 0 1 10 4M7 10A3 3 0 0 1 10 7" /></svg></TaskSlot>
        <TaskSlot $w={17.9} $color="#bbb"><Volume2 size={13} strokeWidth={1.600} /></TaskSlot>
        <TaskSlot $w={22}><svg width="17" height="11" viewBox="0 0 17 11" fill="none" stroke="#ddd"><rect x=".5" y=".5" width="16" height="10" /><path d="M2 3.500H15M2 5.500H15" strokeDasharray="1 1" /><path d="M4 8H13" /></svg></TaskSlot>
        <Clock>17:20<br />01/12/2023</Clock>
        <TaskSlot $w={21}><svg width="13" height="13" viewBox="0 0 13 13" fill="none" stroke="#ddd"><path d="M.5.5H12.500V9.500H9L6.500 12 4.500 9.500H.5Z" /></svg></TaskSlot>
        <ShowDesktop />
      </Tray>
    </Taskbar>
  );
}

export default function App() {
  return (
    <>
      <Global />
      <Shell>
        <Sidebar>
          <Burger><i /><i /><i /></Burger>
          <NavItem $active $top={72}><Monitor w={42} h={37} sw={5} color="#fff" /></NavItem>
          <NavItem><Laptop /></NavItem>
        </Sidebar>
        <Main>
          <Header>
            <SessionTab $w={179}><Monitor w={24} h={21} sw={2.6} color={c.navy} />SESSIONS</SessionTab>
            <SessionTab $w={539} $active>CDC LE CHESNAY CFRD107 @ CDC-FR21020002<Cross color={c.rust} /></SessionTab>
            <HeaderTools>Actions<Caret /><FaUserCircle size={32} /></HeaderTools>
          </Header>
          <Panel>
            <TabBar>
              <Tab $active>SCREEN SHARING</Tab>
              <Tab>FILE TRANSFER</Tab>
              <Tab>SYSTEM INFO</Tab>
              <TabActions>
                <Slot><Person><path d="M14 18 24 14.500 34 19C34 27 31 32 25 35 18 33 15 28 14 18Z" fill="#fff" /><path d="M16 19.500 24 16.500 32 20C32 26 30 30 25 33 19 30 17 26 16 19.500Z" /></Person></Slot>
                <Divider />
                <Slot><PersonBadge d="M20.500 26H30M26.500 22 30.500 26 26.500 30" /></Slot>
                <Slot><PersonBadge d="M20.500 26H30.500M25.500 21V31" /></Slot>
                <Slot><PersonBadge d="M20.500 26H30.500" /></Slot>
                <Slot>
                  <svg width="36" height="36" viewBox="0 0 36 36" fill={c.slate}>
                    <path d="M0 0H35V28H0ZM2.500 3V25.500H32.500V3Z" fillRule="evenodd" /><path d="M3 3H33V24L26 20Z" /><path d="M6 4.500H31V18" fill="none" stroke="#9aa" />
                    <path d="M13 28H21V32H25V35H6V32H13Z" />
                    <path d="M19 20 28 16.500 36 20V27Q34 34 28 36 20 33 19 27Z" fill="#fff" /><path d="M20.500 21 28 18 35 21V27Q33 33 28 35.500 22 33 20.500 27Z" />
                    <path d="M24.500 26V23H29M31 27V30H26.500M27.500 21 29.500 23 27.500 25M28 28 26 30 28 32" fill="none" stroke="#fff" strokeWidth="1.400" />
                  </svg>
                </Slot>
                <Slot><svg width="24" height="33" viewBox="0 0 24 33" fill={c.slate}><path d="M2.500 0H21.500V5H18.500L19.500 13Q24 16 24 22H0Q0 16 4.500 13L5.500 5H2.500ZM10.500 22H13.500V30L12 33 10.500 30Z" /></svg></Slot>
                <Divider />
                <Slot $color={c.tealDark}><FaComments size={38} /></Slot>
                <Slot><Cross s={36} w={4} /></Slot>
              </TabActions>
            </TabBar>
            <Body>
              <Viewer>
                <Toolbar>
                  <ToolGroup>
                    <Slot><svg width="35" height="35" viewBox="0 0 35 35"><circle cx="17.500" cy="17.500" r="16" fill="none" stroke={c.slate} strokeWidth="2.800" /><rect x="11" y="11" width="13" height="13" fill={c.slate} /></svg></Slot>
                    <Slot><svg width="25" height="33" viewBox="0 0 25 33" fill={c.tealDark}><path d="M0 13V10Q0 0 11.700 0V13ZM13.300 0Q25 0 25 10V13H13.300ZM0 15H25V23Q25 33 15 33H10Q0 33 0 23Z" /></svg></Slot>
                    <Slot><FaPowerOff size={34} /><Chevron /></Slot>
                    <Slot><svg width="34" height="33" viewBox="0 0 34 33" fill="none" stroke="#d3d8db" strokeWidth="1.200"><rect x="8.500" y=".6" width="16" height="16" /><rect x=".6" y="16.600" width="16.400" height="15.800" /><rect x="17" y="16.600" width="16.400" height="15.800" />
                      <g fill="#ccd2d6" stroke="none" fontFamily="Open Sans" fontSize="10.500" textAnchor="middle"><text x="16.500" y="12.500">A</text><text x="9" y="28.500">C</text><text x="24.500" y="28.500">D</text></g></svg></Slot>
                    <Slot><svg width="34" height="34" viewBox="0 0 34 34" fill={c.slate}><path d="M0 26 25 0 34 7.500 9 34 7 33ZM21.500 9 25 12.500 30 7.500 26 4Z" fillRule="evenodd" /><path d="M5.500 1 7 5 11 6.500 7 8 5.500 12 4 8 0 6.500 4 5ZM15 1 16 3.300 18 4.200 16 5 15 7 14 5 12 4.200 14 3.300ZM28.500 19 30 23 34 24.500 30 26 28.500 30 27 26 23 24.500 27 23Z" /></svg></Slot>
                  </ToolGroup>
                  <ToolGroup>
                    <Slot><svg width="25" height="33" viewBox="0 0 25 33" fill="none" stroke={c.slate}><rect x=".7" y="3.200" width="23.600" height="29" rx="1.500" strokeWidth="1.200" /><rect x="4.700" y="7.500" width="15.600" height="21.500" strokeWidth="1.400" /><path d="M5 8 9 4.500H16L20 8Z" fill={c.slate} stroke="none" /><circle cx="12.500" cy="3" r="2.200" strokeWidth="1.200" /><path d="M8 12.500H17M8 18.500H17M8 24.500H17" strokeWidth="1.800" /></svg></Slot>
                    <Slot><svg width="34" height="21" viewBox="0 0 34 21" fill="none" stroke={c.slate}><rect x=".7" y=".7" width="32.600" height="19.600" rx="1" strokeWidth="1.200" /><path d="M4 6H30M4 10.500H30M4 15H8" strokeWidth="3" strokeDasharray="2.700 1.200" /><path d="M9.500 15H21M28.500 4.500V11.500" strokeWidth="3" /><path d="M23 15H30" strokeWidth="3" strokeDasharray="2.700 1.200" /></svg></Slot>
                    <Slot><svg width="34" height="30" viewBox="0 0 34 30" fill="none" stroke={c.slate}><path d="M1.700 7Q1.700 5.500 3.500 5.500H9L11 1.500H22.500L25 5.500H30.500Q32.300 5.500 32.300 7.500V26.500Q32.300 28.300 30.500 28.300H3.500Q1.700 28.300 1.700 26.500Z" strokeWidth="3.200" /><circle cx="17" cy="16.500" r="6.500" strokeWidth="3" /></svg><Chevron /></Slot>
                    <Slot><svg width="34" height="21" viewBox="0 0 34 21" fill="#fff" stroke="#dde0e2"><rect x="13" y="1" width="20" height="13" strokeWidth="1.200" /><path d="M24 13.500H33" strokeWidth="2" /><rect x=".8" y="4" width="22" height="13" strokeWidth="1.500" stroke="#cfd4d7" /><path d="M1 16.500H23M11.500 17V20M8.500 20H14.500" stroke="#cfd4d7" strokeWidth="2" /></svg></Slot>
                    <Slot><svg width="37" height="33" viewBox="0 0 37 33"><rect x="1" y="4" width="35" height="22" rx="1" fill="#fff" stroke={c.slate} strokeWidth="1.600" /><rect x="18.500" y="4" width="17.500" height="19" fill={c.slate} /><path d="M0 22H37V24.500Q37 26 35 26H2Q0 26 0 24.500ZM16 25H21L22.500 30H14.500Z" fill={c.slate} /><path d="M34.500 5V21.500H19.500" fill="none" stroke="#9aa" /><path d="M18.500 0V32.500" stroke="#5f4c4c" strokeWidth="1" /></svg><Chevron /></Slot>
                    <Slot><svg width="34" height="25" viewBox="0 0 34 25"><rect x=".9" y=".9" width="32.200" height="18" fill="#fff" stroke={c.slate} strokeWidth="1.500" /><path d="M0 16.500H34V20.500H0ZM14.500 20H19.500L21 24.500H13Z" fill={c.slate} /><path d="M6 8.700H14M10.500 4.700 14.500 8.700 10.500 12.700M28 8.700H20M23.500 4.700 19.500 8.700 23.500 12.700" fill="none" stroke={c.slate} strokeWidth="1.900" /></svg></Slot>
                    <Slot><svg width="32" height="31" viewBox="0 0 32 31" fill="none" stroke={c.slate} strokeWidth="3.200"><path d="M1.600 11V1.600H11.500M20.500 1.600H30.400V11M30.400 20V29.400H20.500M11.500 29.400H1.600V20" /></svg></Slot>
                  </ToolGroup>
                </Toolbar>
                <Banner>
                  <BannerMessage><InfoIcon /><BannerLink>The session is running in a limited user context. Click here to elevate privileges now.</BannerLink></BannerMessage>
                  <Cross s={21} w={4.2} />
                </Banner>
                <Stage>
                  <Desktop><Acrobat /><TaskbarRow /></Desktop>
                </Stage>
              </Viewer>
              <Chat>
                <ChatHeader>
                  <ChatTitles><ChatTitle>Chat</ChatTitle><ChatSub>Chatting With Everyone</ChatSub></ChatTitles>
                  <Toggle><Knob><svg width="24" height="18" viewBox="0 0 24 18"><path d="M2 9 9 15.500 22 2" fill="none" stroke="#fff" strokeWidth="4.200" /></svg></Knob></Toggle>
                  <ChatChevron width="20" height="33" viewBox="0 0 20 33"><path d="M2 1.500 17 16.500 2 31.500" fill="none" stroke={c.slate} strokeWidth="3" /></ChatChevron>
                </ChatHeader>
                <TextBox $h={269}>
                  <Messages>
                    <Message $tight $loose $color="#3f4e5a">has opened the following prompt:</Message>
                    <Message $color="#4a86bd">FRITSupport01 is requesting to view<br />and control your computer.
                      <Indent>Would you like to <ChatLink>Allow</ChatLink> or <ChatLink>Refuse</ChatLink>?</Indent></Message>
                    <Message>(17:13:42) The customer has allowed<br />full-control screen sharing to<br />FRITSupport01.</Message>
                    <Message>(17:13:42) FRITSupport01 can now view<br />and control the customer's screen.</Message>
                  </Messages>
                  <ScrollTrack><ScrollArrow $color="#505050" /><ScrollThumb /><ScrollArrow $down /></ScrollTrack>
                </TextBox>
                <TextBox $h={194}>
                  <Placeholder>Type your message here.</Placeholder>
                  <ScrollTrack><ScrollArrow /><ScrollArrow $down /></ScrollTrack>
                </TextBox>
                <Send>SEND</Send>
              </Chat>
            </Body>
          </Panel>
        </Main>
      </Shell>
    </>
  );
}
